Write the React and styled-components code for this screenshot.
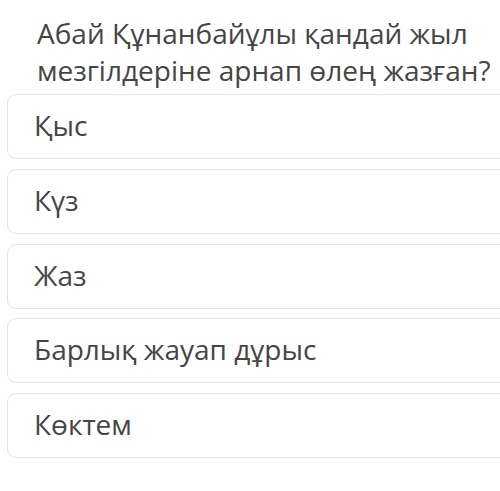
import styled, { createGlobalStyle } from "styled-components";

const GlobalStyle = createGlobalStyle`
    body {
        margin: 0;
        background: #ffffff;
        overflow: hidden;
        font-family: "Open Sans", "Noto Sans", sans-serif;
    }
`

const Page = styled.div`
    width: 500px;
    height: 491px;
    overflow: hidden;
    padding: 15px 0 0 7px;
    box-sizing: border-box;
`

const Question = styled.h2`
    margin: 0 0 5px 30px;
    font-size: 28px;
    line-height: 37px;
    font-weight: 400;
    color: #454545;
    white-space: nowrap;
`

const Options = styled.div`
    display: flex;
    flex-direction: column;
    gap: 9.75px;
`

const Option = styled.div`
    width: 520px;
    height: 65px;
    box-sizing: border-box;
    padding: 12px 26px 14px;
    border: 1px solid #e4e4e4;
    border-radius: 9px;
    background: #fefefe;
    font-size: 28px;
    line-height: 37px;
    color: #454545;
`

const answers = ["Қыс", "Күз", "Жаз", "Барлық жауап дұрыс", "Көктем"]

const App = () => {
    return (
        <Page>
            <GlobalStyle />
            <Question>
                Абай Құнанбайұлы қандай жыл<br />
                мезгілдеріне арнап өлең жазған?
            </Question>
            <Options>
                {answers.map(answer => (
                    <Option key={answer}>{answer}</Option>
                ))}
            </Options>
        </Page>
    )
}

export default App
